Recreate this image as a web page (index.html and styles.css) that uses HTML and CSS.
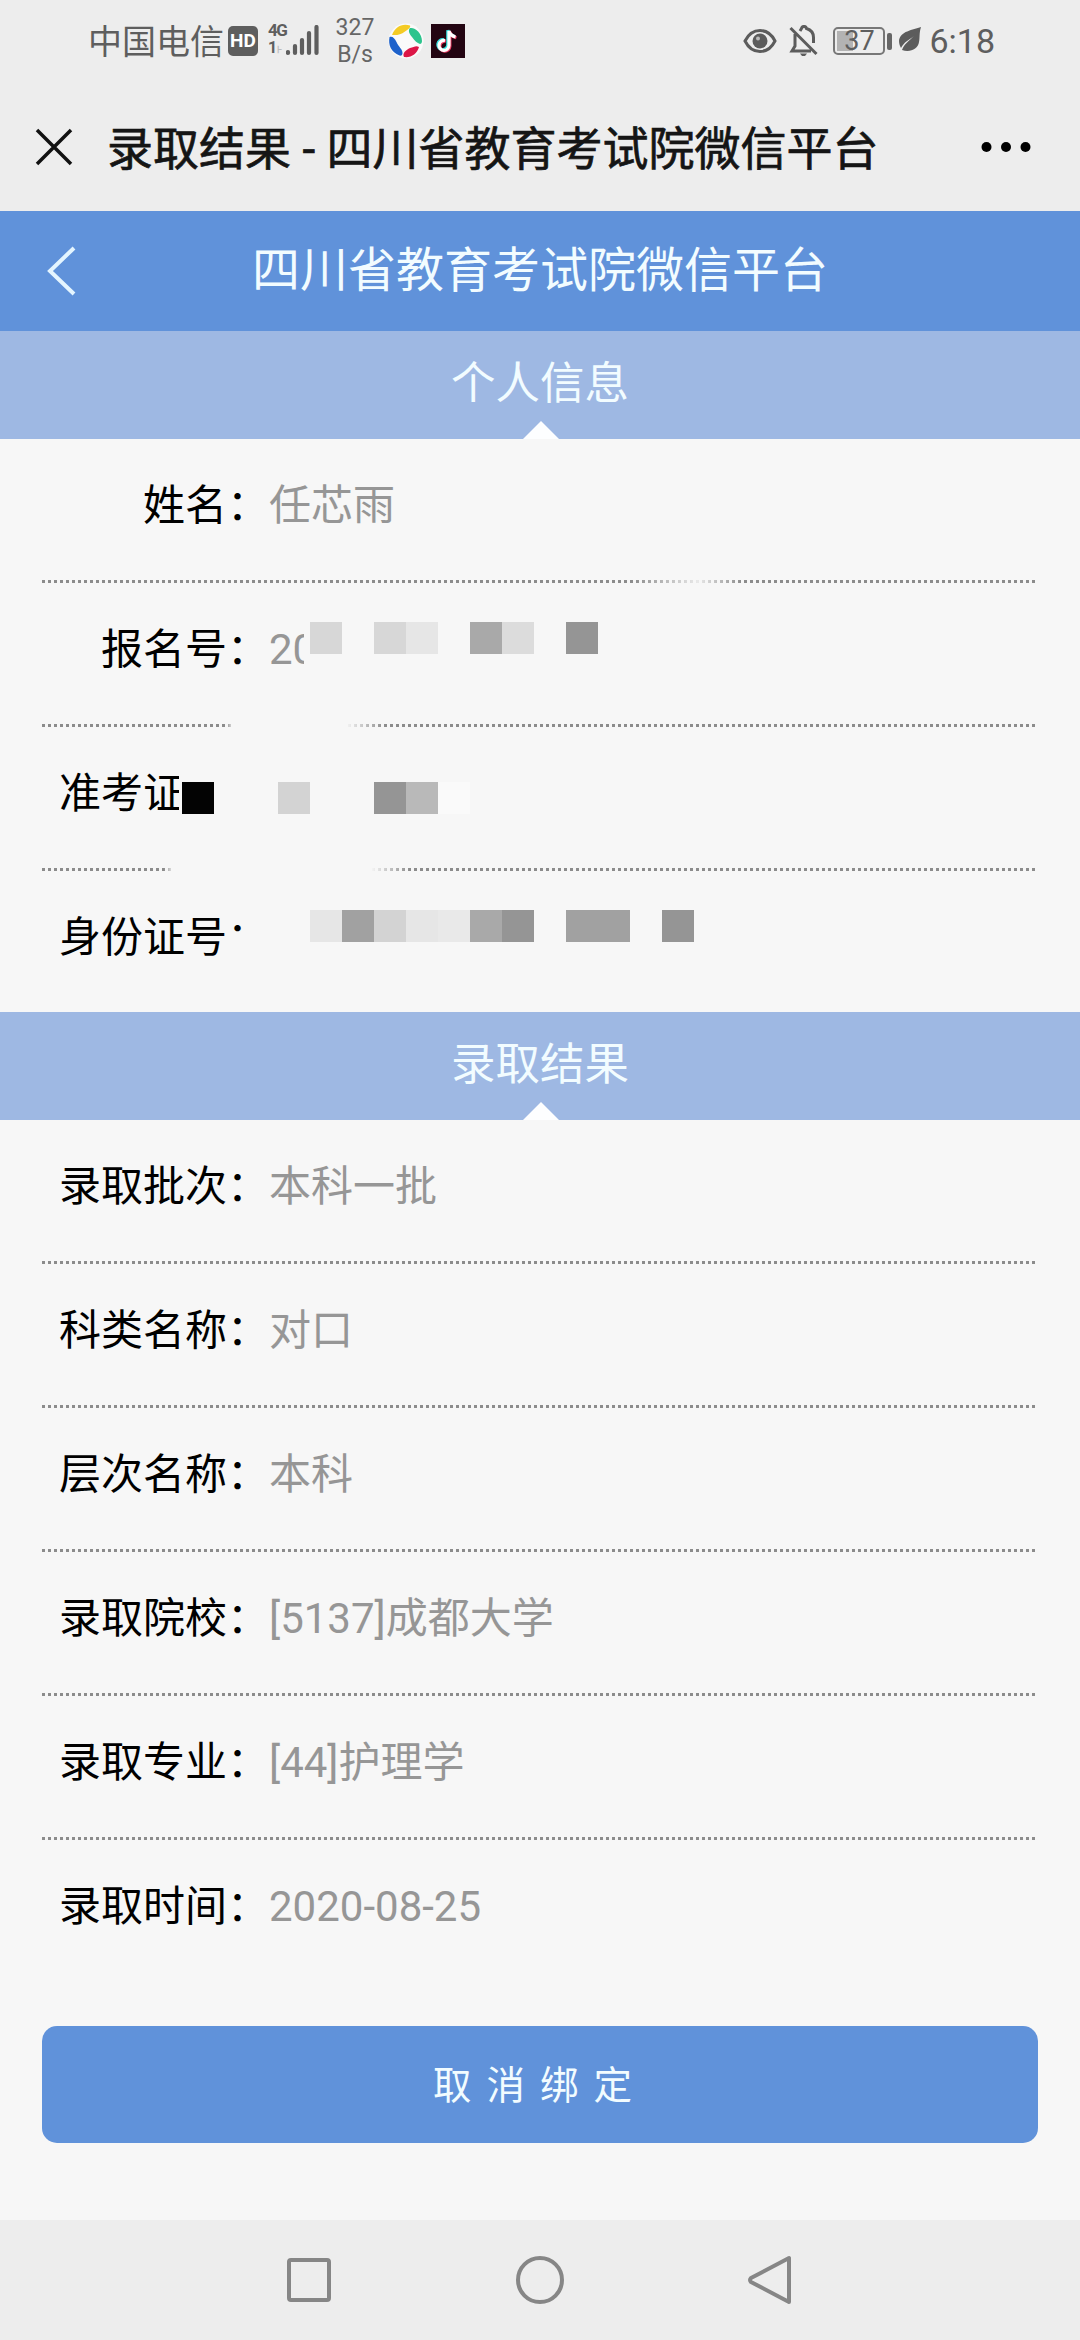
FILE: index.html
```html
<!DOCTYPE html>
<html lang="zh-CN">
<head>
<meta charset="utf-8">
<title>录取结果 - 四川省教育考试院微信平台</title>
<link rel="stylesheet" href="styles.css">
</head>
<body>
<div class="screen">
  <div class="status">
    <div class="status-left">
      <span class="carrier">中国电信</span>
      <span class="hd">HD</span>
      <span class="net"><span class="net-type">4G</span><span class="net-sub">1<i>⊦</i></span></span>
      <svg class="signal" width="33" height="31" viewBox="0 0 33 31"><g fill="none" stroke="#5e5e5e" stroke-width="4.200" stroke-linecap="round"><path d="M2 27v1M9 21v7M16 15v13M23 8v20M30.500 2v26"/></g></svg>
      <span class="speed"><span>327</span><span>B/s</span></span>
      <svg class="app" width="36" height="36" viewBox="0 0 36 36"><circle cx="18" cy="18" r="17.500" fill="#fafafa"/><path fill="#f4cb24" d="M4 12C7 4 14 0 22 2.500c1 2-2 4-5 6-4 3-8 4-13 3.500z"/><path fill="#2dc48d" d="M22 5c5-1 12 5 12 13 0 2-1 3-2 3-3-1-5-3-8-7-3-3-4-7-2-9z"/><path fill="#1e62cb" d="M1.500 14c3-1 5 1 7 5 2 5 6 7 6 11 0 2-1 3-3 2.500C3 29 0 22 1.500 14z"/><path fill="#dc1747" d="M31 24c-2 7-8 11-15 10-2-4 2-7 6-9 4-1 6-3 9-1z"/></svg>
      <svg class="tiktok" width="34" height="34" viewBox="0 0 34 34"><path fill="#230512" d="M0 0h34v34H0z"/><g fill="none" stroke-width="3.200"><path stroke="#35dfe0" d="M14 16.500a5 5 0 1 0 4 5V7c1 4 3 5 6.500 6" transform="translate(-1.200 -.8)"/><path stroke="#ee3a62" d="M14 16.500a5 5 0 1 0 4 5V7c1 4 3 5 6.500 6" transform="translate(.9 .8)"/><path stroke="#fff" d="M14 16.500a5 5 0 1 0 4 5V7c1 4 3 5 6.500 6"/></g></svg>
    </div>
    <div class="status-right">
      <svg class="eye" width="34" height="26" viewBox="0 0 34 26"><path d="M2 13C9-1 25-1 32 13 25 27 9 27 2 13z" fill="none" stroke="#5c5c5c" stroke-width="3"/><circle cx="17" cy="13" r="7.500" fill="#5c5c5c"/><circle cx="15" cy="10.500" r="2" fill="#bbb"/></svg>
      <svg class="bell" width="30" height="32" viewBox="0 0 30 32"><g fill="none" stroke="#5c5c5c" stroke-width="3"><path d="M1.500 3l26 26M6 9v12l-3 5h19M11 6l1.500-2.500C13 .8 17 .8 17.500 3.500c5 1.500 7 5 7 9V18"/></g><path d="M11 28.500h7l-2 2.500h-3z" fill="#5c5c5c"/></svg>
      <span class="battery"><span>37</span></span><span class="cap"></span>
      <svg class="leaf" width="24" height="26" viewBox="0 0 24 26"><path d="M23 1C15 4 2 5 1 15c0 3 1 5 2 7 3-6 8-8 13-12C11 15 6 18 4 24c8 3 16-1 17-8 1-4 0-9 2-15z" fill="#5c5c5c"/></svg>
      <span class="time">6:18</span>
    </div>
  </div>
  <div class="titlebar">
    <svg class="close" width="38" height="38" viewBox="0 0 38 38"><path d="M2 2l34 34M36 2L2 36" stroke="#111" stroke-width="3.500" fill="none"/></svg>
    <span class="page-title">录取结果 - 四川省教育考试院微信平台</span>
    <svg class="more" width="50" height="12" viewBox="0 0 50 12"><circle cx="5.500" cy="6" r="5"/><circle cx="25" cy="6" r="5"/><circle cx="44.500" cy="6" r="5"/></svg>
  </div>
  <div class="header">
    <svg class="back" width="30" height="50" viewBox="0 0 30 50"><path d="M27 2L3 25l24 23" stroke="#e4f5ff" stroke-width="4" fill="none"/></svg>
    <span>四川省教育考试院微信平台</span>
  </div>
  <div class="section"><span>个人信息</span></div>
  <div class="rows">
    <div class="row"><span class="label">姓名：</span><span class="value">任芯雨</span><i class="fade fade-a"></i></div>
    <div class="row"><span class="label">报名号：</span><span class="value">2<span class="cut">0</span></span><i class="fade fade-b"></i>
      <div class="mosaic m1"><i class="c1"></i><i></i><i class="c1"></i><i class="c2"></i><i></i><i class="c5"></i><i class="c7"></i><i></i><i class="c6"></i></div></div>
    <div class="row"><span class="label start">准考证</span><i class="smudge"></i><i class="fade fade-c"></i>
      <div class="mosaic m2"><i class="c0"></i><i></i><i></i><i class="c3"></i><i></i><i></i><i class="c6"></i><i class="c8"></i><i class="c9"></i></div></div>
    <div class="row"><span class="label">身份证号<span class="colon">：</span></span>
      <div class="mosaic m3"><i class="c2"></i><i class="c4"></i><i class="c3"></i><i class="c2"></i><i class="c10"></i><i class="c5"></i><i class="c6"></i><i></i><i class="c4"></i><i class="c4"></i><i></i><i class="c6"></i></div></div>
  </div>
  <div class="section"><span>录取结果</span></div>
  <div class="rows">
    <div class="row"><span class="label">录取批次：</span><span class="value">本科一批</span></div>
    <div class="row"><span class="label">科类名称：</span><span class="value">对口</span></div>
    <div class="row"><span class="label">层次名称：</span><span class="value">本科</span></div>
    <div class="row"><span class="label">录取院校：</span><span class="value">[5137]成都大学</span></div>
    <div class="row"><span class="label">录取专业：</span><span class="value">[44]护理学</span></div>
    <div class="row"><span class="label">录取时间：</span><span class="value">2020-08-25</span></div>
  </div>
  <button class="unbind">取消绑定</button>
  <div class="navbar">
    <svg width="50" height="50" viewBox="0 0 50 50"><rect x="5" y="5" width="40" height="40" rx="2"/></svg>
    <svg width="50" height="50" viewBox="0 0 50 50"><circle cx="25" cy="25" r="22"/></svg>
    <svg width="50" height="50" viewBox="0 0 50 50"><path d="M43 3v44L5 27q-2-2 0-4z" stroke-linejoin="round"/></svg>
  </div>
</div>
</body>
</html>
```
FILE: styles.css
```css
* { box-sizing: border-box; }
body { margin: 0; font-family: Roboto, "Noto Sans CJK SC", sans-serif; background: #f7f7f7; }
svg { display: block; flex: none; }
.screen { width: 1080px; height: 2340px; display: flex; flex-direction: column; overflow: hidden; }
.status { height: 82px; flex: none; background: #ededed; color: #5e5e5e; display: flex; justify-content: space-between; padding: 0 86px 0 88px; }
.status-left, .status-right { display: flex; align-items: center; height: 82px; }
.carrier { font-size: 34px; line-height: 40px; width: 136px; margin-right: 4px; padding-top: 1px; white-space: nowrap; }
.hd { width: 30px; height: 30px; border-radius: 5px; background: #5e5e5e; color: #fff; font-size: 19px; font-weight: 700; line-height: 30px; text-align: center; margin-right: 10px; }
.net { display: flex; flex-direction: column; font-size: 17px; font-weight: 700; line-height: 17px; width: 19px; margin-top: -3px; }
.net-type { letter-spacing: -1.500px; }
.net-sub { font-size: 16px; white-space: nowrap; }
.net-sub i { color: #bbb; font-style: normal; font-size: 10px; }
.signal { margin: -2px 16px 0 -1px; }
.speed { display: flex; flex-direction: column; align-items: center; font-size: 23px; line-height: 27px; width: 40px; color: #666; margin-right: 13px; }
.app { margin-right: 7px; }
.eye { margin-right: 12px; }
.bell { margin-right: 14px; }
.battery { width: 52px; height: 28px; border: 2px solid #777; border-radius: 5px; padding: 2px; display: flex; }
.battery span { flex: 1; background: linear-gradient(90deg, #b3b3b3 37%, transparent 37%); font-size: 27px; line-height: 21px; text-align: center; }
.cap { width: 5px; height: 17px; background: #666; border-radius: 2px; margin: 0 6px 0 2px; }
.leaf { margin: -4px 7px 0 0; }
.time { font-size: 34px; line-height: 40px; margin-right: -1px; }
.titlebar { height: 129px; flex: none; background: #ededed; display: flex; align-items: center; padding: 0 49px 0 35px; }
.page-title { flex: 1; margin-left: 34px; padding-top: 5px; font-size: 46px; font-weight: 400; -webkit-text-stroke: .7px #151515; color: #151515; line-height: 60px; white-space: nowrap; }
.header { height: 120px; flex: none; background: #6092da; color: #f2fcff; display: grid; grid-template-columns: 80px 1fr 80px; align-items: center; text-align: center; font-size: 48px; line-height: 60px; }
.header span { white-space: nowrap; }
.back { margin-left: 47px; }
.section { height: 108px; flex: none; background: #9eb8e3; color: #f2fcff; font-size: 44.500px; line-height: 107px; text-align: center; position: relative; }
.section::after { content: ""; position: absolute; left: 523px; bottom: 0; border: 18px solid transparent; border-top: 0; border-bottom-color: #fdfeff; }
.rows { padding: 0 42px; }
.row { height: 144px; position: relative; display: flex; font-size: 42px; line-height: 134px; background: repeating-linear-gradient(90deg, #8c8c8c 0 3px, transparent 3px 6px) 0 100% / 100% 3px no-repeat; }
.row:last-child { height: 141px; background: none; }
.label { width: 227px; text-align: right; color: #000; white-space: nowrap; }
.label.start { text-align: left; padding-left: 17px; }
.value { color: #969696; white-space: nowrap; }
.cut { display: inline-block; width: 11px; height: 134px; overflow: hidden; vertical-align: top; }
.colon { display: inline-block; height: 67px; overflow: hidden; vertical-align: top; }
.smudge { position: absolute; left: 137px; top: 40px; width: 10px; height: 60px; background: #f7f7f7; }
.fade { position: absolute; bottom: 0; height: 4px; }
.fade-a { left: 590px; width: 110px; background: linear-gradient(90deg, transparent, #f7f7f7dd 60%, transparent); }
.fade-b { left: 184px; width: 159px; background: linear-gradient(90deg, transparent, #f7f7f7 5%, #f7f7f7 75%, transparent); }
.fade-c { left: 122px; width: 246px; background: linear-gradient(90deg, transparent, #f7f7f7 4%, #f7f7f7 84%, transparent); }
.mosaic { position: absolute; display: grid; grid-auto-flow: column; grid-auto-columns: 32px; grid-template-rows: 32px; }
.m1 { left: 268px; top: 39px; }
.m2 { left: 140px; top: 55px; }
.m3 { left: 268px; top: 39px; }
.c0 { background: #030303; }
.c1 { background: #d7d7d7; }
.c2 { background: #e6e6e6; }
.c3 { background: #d3d3d3; }
.c4 { background: #a1a1a1; }
.c5 { background: #a9a9a9; }
.c6 { background: #959595; }
.c7 { background: #dcdcdc; }
.c8 { background: #b9b9b9; }
.c9 { background: #fafafa; }
.c10 { background: #e9e9e9; }
.unbind { display: block; flex: none; width: 996px; height: 117px; margin: 45px 42px 77px; padding: 3px 0 0; border: 0; border-radius: 15px; background: #6092da; color: #f2fcff; font: 38.500px/114px Roboto, "Noto Sans CJK SC", sans-serif; letter-spacing: 15px; text-align: center; }
.navbar { height: 120px; flex: none; background: #ededed; display: flex; justify-content: center; align-items: center; gap: 181px; }
.navbar svg { fill: none; stroke: #868686; stroke-width: 4; }
```
